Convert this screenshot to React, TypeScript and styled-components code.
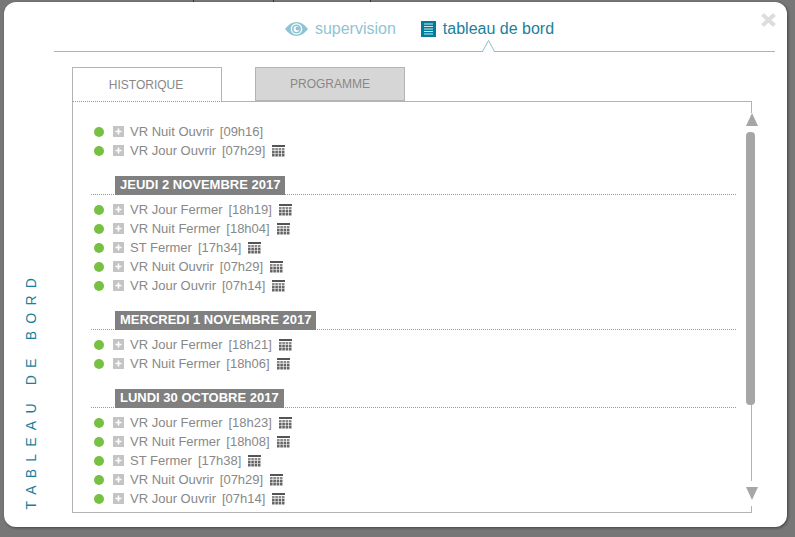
import { createGlobalStyle, styled } from 'styled-components'

const GlobalStyle = createGlobalStyle`
  html, body {
    margin: 0;
    height: 100%;
    overflow: hidden;
  }
  body {
    font-family: "Liberation Sans", Arial, sans-serif;
    background: #777;
  }
`

const Backdrop = styled.div`
  width: 795px;
  height: 537px;
  box-sizing: border-box;
  padding: 2px 8px 10px 4px;
  background:
    linear-gradient(#333, #333) 193px 0 / 1px 2px no-repeat,
    linear-gradient(#333, #333) 273px 0 / 1px 2px no-repeat,
    linear-gradient(#333, #333) 370px 0 / 1px 2px no-repeat,
    #777;
`

const Modal = styled.div`
  position: relative;
  height: 525px;
  background: #fff;
  border-radius: 12px;
  box-shadow: 1px 1px 3px rgba(0, 0, 0, 0.45);
`

const Close = styled.svg`
  position: absolute;
  top: 10px;
  right: 10px;
`

const Header = styled.header`
  position: relative;
  box-sizing: border-box;
  height: 50px;
  margin: 0 12px 0 50px;
  padding: 4px 0 0 10px;
  display: flex;
  justify-content: center;
  align-items: center;
  gap: 25px;
  border-bottom: 1px solid #8cc0c6;
`

const NavItem = styled.a<{ $active?: boolean }>`
  display: flex;
  align-items: center;
  gap: 7px;
  font-size: 16px;
  color: ${props => (props.$active ? '#1a7f9b' : '#8fc4d4')};
`

const Notch = styled.svg`
  position: absolute;
  left: 428px;
  bottom: -1px;
`

const Body = styled.div`
  display: flex;
  margin-top: 15px;
`

const Side = styled.aside`
  width: 68px;
  height: 445px;
  display: flex;
  align-items: flex-end;
  justify-content: center;
  padding-right: 14px;
  box-sizing: border-box;
`

const SideLabel = styled.span`
  writing-mode: vertical-rl;
  transform: rotate(180deg);
  margin-bottom: 3px;
  font-size: 14px;
  letter-spacing: 7.2px;
  white-space: pre;
  color: #1a7f9b;
`

const Content = styled.div`
  width: 680px;
`

const Tabs = styled.div`
  display: flex;
  gap: 33px;
  height: 35px;
`

const Tab = styled.div<{ $active?: boolean }>`
  box-sizing: border-box;
  width: 150px;
  height: ${props => (props.$active ? '35px' : '34px')};
  padding-right: ${props => (props.$active ? '2px' : '0')};
  display: flex;
  align-items: center;
  justify-content: center;
  font-size: 12px;
  color: #888;
  border: 1px solid #b4b4b4;
  background: ${props => (props.$active ? '#fff' : '#d6d6d6')};
  ${props => props.$active && 'border-bottom: 1px dotted #999; position: relative; z-index: 1;'}
`

const Panel = styled.section`
  box-sizing: border-box;
  height: 412px;
  margin-top: -1px;
  display: flex;
  border: 1px solid #b4b4b4;
  border-right: none;
`

const List = styled.div`
  flex: 1;
  padding: 20px 10px 0 18px;
`

const Group = styled.div`
  margin-bottom: 16px;
`

const DateLine = styled.div`
  height: 18px;
  margin-bottom: 5px;
  padding-left: 24px;
  border-bottom: 1px dotted #999;
  display: flex;
`

const DateLabel = styled.span`
  padding: 0 5px;
  height: 19px;
  line-height: 18px;
  font-size: 13px;
  font-weight: bold;
  color: #fff;
  background: #808080;
`

const Row = styled.div`
  height: 19px;
  display: flex;
  align-items: center;
  padding-left: 3px;
  font-size: 13px;
  color: #888;
  white-space: pre;
`

const Dot = styled.span`
  width: 10px;
  height: 10px;
  border-radius: 50%;
  background: #76c043;
  margin-right: 9px;
`

const Plus = styled.svg`
  margin-right: 6px;
`

const Time = styled.span`
  margin-left: 6px;
`

const Calendar = styled.svg`
  margin-left: 7px;
`

const Rail = styled.div`
  width: 11px;
  margin-right: -5px;
  display: flex;
  flex-direction: column;
  align-items: center;
`

const RailLine = styled.div<{ $height: number }>`
  width: 1px;
  height: ${props => props.$height}px;
  background: #b4b4b4;
`

const Arrow = styled.div<{ $down?: boolean }>`
  width: 0;
  height: 0;
  border-left: 6px solid transparent;
  border-right: 6px solid transparent;
  ${props => (props.$down ? 'border-top: 13px solid #a6a6a6; margin: 6px 0;' : 'border-bottom: 13px solid #a6a6a6; margin: 0 0 6px;')}
`

const Thumb = styled.div`
  width: 9px;
  height: 273px;
  margin-right: 2px;
  border-radius: 4px;
  background: #a6a6a6;
`

type Entry = { name: string; time: string; cal?: boolean }

const groups: { date?: string; rows: Entry[] }[] = [
  {
    rows: [
      { name: 'VR Nuit Ouvrir', time: '[09h16]' },
      { name: 'VR Jour Ouvrir', time: '[07h29]', cal: true },
    ],
  },
  {
    date: 'JEUDI 2 NOVEMBRE 2017',
    rows: [
      { name: 'VR Jour Fermer', time: '[18h19]', cal: true },
      { name: 'VR Nuit Fermer', time: '[18h04]', cal: true },
      { name: 'ST Fermer', time: '[17h34]', cal: true },
      { name: 'VR Nuit Ouvrir', time: '[07h29]', cal: true },
      { name: 'VR Jour Ouvrir', time: '[07h14]', cal: true },
    ],
  },
  {
    date: 'MERCREDI 1 NOVEMBRE 2017',
    rows: [
      { name: 'VR Jour Fermer', time: '[18h21]', cal: true },
      { name: 'VR Nuit Fermer', time: '[18h06]', cal: true },
    ],
  },
  {
    date: 'LUNDI 30 OCTOBRE 2017',
    rows: [
      { name: 'VR Jour Fermer', time: '[18h23]', cal: true },
      { name: 'VR Nuit Fermer', time: '[18h08]', cal: true },
      { name: 'ST Fermer', time: '[17h38]', cal: true },
      { name: 'VR Nuit Ouvrir', time: '[07h29]', cal: true },
      { name: 'VR Jour Ouvrir', time: '[07h14]', cal: true },
    ],
  },
]

const EyeIcon = () => (
  <svg width="23" height="14" viewBox="0 0 23 14">
    <path d="M0 7C3.500 2.400 7.200 0 11.500 0S19.500 2.400 23 7c-3.500 4.600-7.200 7-11.500 7S3.500 11.600 0 7z" fill="#8fc4d4" />
    <circle cx="11.500" cy="7" r="5.800" fill="#fff" />
    <circle cx="11.500" cy="7" r="4.600" fill="#8fc4d4" />
    <circle cx="11.500" cy="7" r="2.900" fill="#fff" />
    <circle cx="12.500" cy="6.600" r="2" fill="#8fc4d4" />
  </svg>
)

const DocIcon = () => (
  <svg width="15" height="16" viewBox="0 0 15 16">
    <rect width="15" height="16" fill="#007d9b" />
    {[3, 5.5, 8, 10.5, 13].map(y => (
      <rect key={y} x="3" y={y - 0.5} width="9" height="1" fill="#cfe6ec" />
    ))}
  </svg>
)

const PlusIcon = () => (
  <Plus width="11" height="11" viewBox="0 0 11 11">
    <rect width="11" height="11" fill="#c4c4c4" />
    <path d="M5.500 2.500v6M2.500 5.500h6" stroke="#fff" strokeWidth="1.600" />
  </Plus>
)

const CalendarIcon = () => (
  <Calendar width="13" height="12" viewBox="0 0 13 12">
    <rect width="13" height="2" fill="#555" />
    {[3, 6, 9].flatMap(y =>
      [0, 3.3, 6.6, 9.9].map(x => (
        <rect key={`${x}-${y}`} x={x} y={y} width="2.600" height="2.500" fill={y === 3 ? '#8a8a8a' : '#666'} />
      ))
    )}
  </Calendar>
)

const App = () => {
  return (
    <Backdrop>
      <GlobalStyle />
      <Modal>
        <Close width="17" height="16" viewBox="0 0 17 16">
          <path d="M2.500 2.500l12 11M14.500 2.500l-12 11" stroke="#ddd" strokeWidth="4" />
        </Close>
        <Header>
          <NavItem>
            <EyeIcon />
            supervision
          </NavItem>
          <NavItem $active>
            <DocIcon />
            tableau de bord
          </NavItem>
          <Notch width="13" height="12" viewBox="0 0 13 12">
            <path d="M0.500 11.500L6.500 0.500L12.500 11.500" fill="#fff" stroke="#8cc0c6" />
            <rect x="1.500" y="11" width="10" height="1" fill="#fff" />
          </Notch>
        </Header>
        <Body>
          <Side>
            <SideLabel>TABLEAU DE BORD</SideLabel>
          </Side>
          <Content>
            <Tabs>
              <Tab $active>HISTORIQUE</Tab>
              <Tab>PROGRAMME</Tab>
            </Tabs>
            <Panel>
              <List>
                {groups.map((group, i) => (
                  <Group key={i}>
                    {group.date && (
                      <DateLine>
                        <DateLabel>{group.date}</DateLabel>
                      </DateLine>
                    )}
                    {group.rows.map((row, j) => (
                      <Row key={j}>
                        <Dot />
                        <PlusIcon />
                        {row.name}
                        <Time>{row.time}</Time>
                        {row.cal && <CalendarIcon />}
                      </Row>
                    ))}
                  </Group>
                ))}
              </List>
              <Rail>
                <RailLine $height={11} />
                <Arrow />
                <Thumb />
                <RailLine $height={76} />
                <Arrow $down />
                <RailLine $height={6} />
              </Rail>
            </Panel>
          </Content>
        </Body>
      </Modal>
    </Backdrop>
  )
}

export default App
